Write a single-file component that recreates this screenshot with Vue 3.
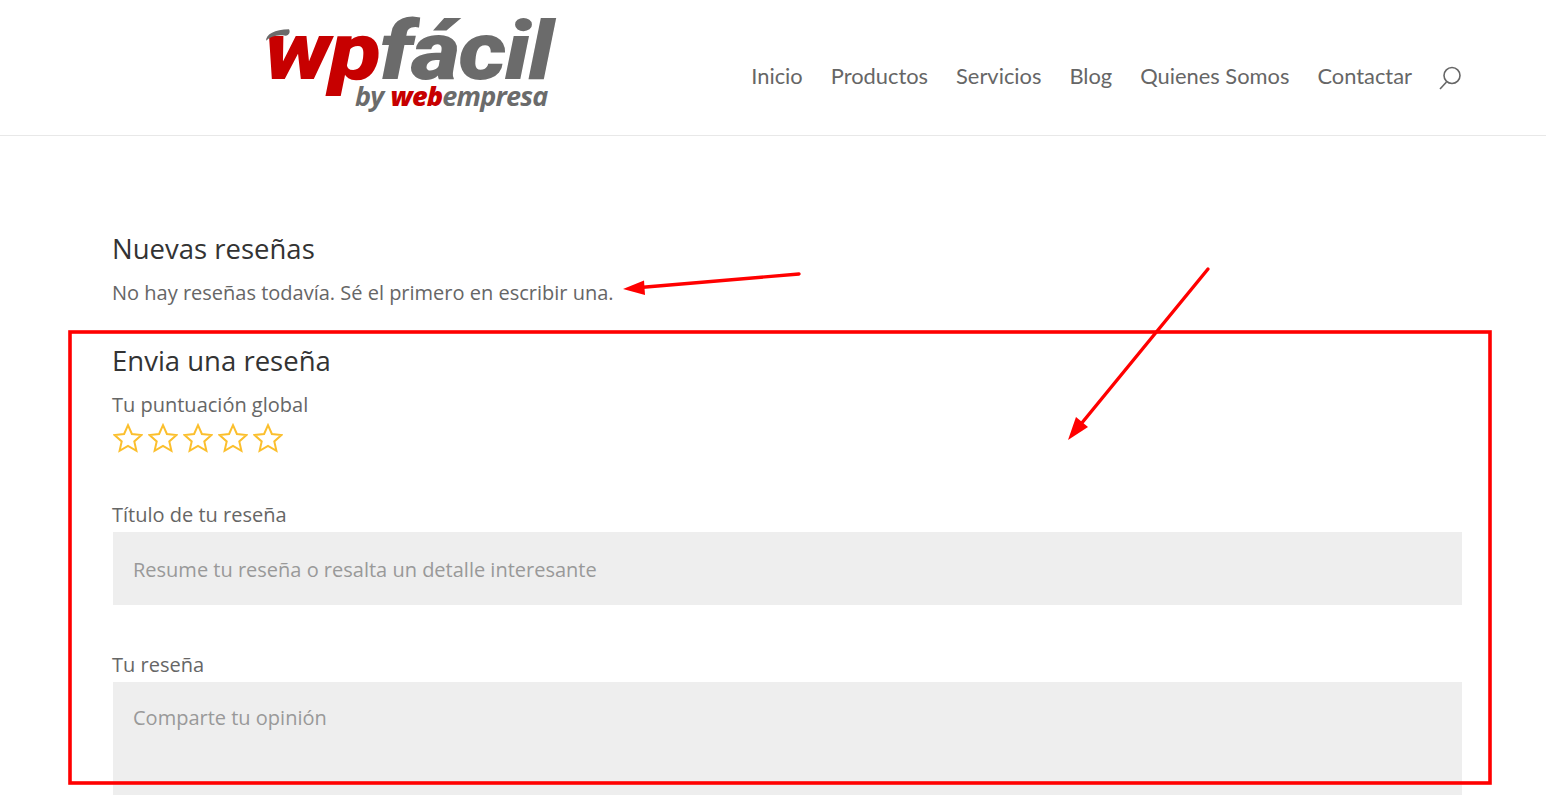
<template>
  <div class="page">
    <header class="site-header">
      <a class="logo" href="#" aria-label="wpfácil by webempresa">
        <div class="logo-main">
          <svg class="logo-drop" viewBox="0 0 30 18" aria-hidden="true">
            <path d="M1 17C1 8 11 1 28 1C30 5 28 9 24 10C14 8 6 11 1 17Z" fill="#6b6b6b" />
          </svg>
          <span class="logo-wp">wp</span><span class="logo-facil">fácil</span>
        </div>
        <div class="logo-sub">
          <span class="logo-by">by</span><span class="logo-web">web</span><span class="logo-empresa">empresa</span>
        </div>
      </a>
      <nav class="main-nav">
        <a v-for="item in navItems" :key="item" href="#">{{ item }}</a>
        <svg class="search-icon" viewBox="0 0 24 24" aria-label="Buscar">
          <circle cx="14" cy="9.5" r="8" />
          <path d="M8.5 16L2 23" />
        </svg>
      </nav>
    </header>

    <main class="content">
      <section class="reviews">
        <h2>Nuevas reseñas</h2>
        <p>No hay reseñas todavía. Sé el primero en escribir una.</p>
      </section>

      <form class="review-form" @submit.prevent>
        <h2>Envia una reseña</h2>
        <div class="rating">
          <span class="label">Tu puntuación global</span>
          <div class="stars">
            <svg v-for="n in 5" :key="n" viewBox="0 0 30 30" aria-hidden="true">
              <path d="M15 2.2L18.9 11L28.5 12L21.3 18.4L23.4 27.8L15 23L6.6 27.8L8.7 18.4L1.5 12L11.1 11Z" />
            </svg>
          </div>
        </div>
        <label class="field title-field">
          <span class="label">Título de tu reseña</span>
          <input type="text" placeholder="Resume tu reseña o resalta un detalle interesante" />
        </label>
        <label class="field body-field">
          <span class="label">Tu reseña</span>
          <textarea placeholder="Comparte tu opinión"></textarea>
        </label>
      </form>
    </main>

    <svg class="annotations" viewBox="0 0 1546 795" aria-hidden="true">
      <rect x="70" y="332" width="1420" height="451" />
      <path d="M799 274L640 287.5" />
      <polygon points="623,289 644,280.5 645,295" />
      <path d="M1208 269L1081 424" />
      <polygon points="1068,440 1076,417 1088,427" />
    </svg>
  </div>
</template>

<script setup>
const navItems = ['Inicio', 'Productos', 'Servicios', 'Blog', 'Quienes Somos', 'Contactar']
</script>

<style>
html,
body {
  overflow: hidden;
  background: #fff;
}
</style>

<style scoped>
.page {
  position: relative;
  height: 795px;
  overflow: hidden;
  font-family: "Open Sans", "Noto Sans", sans-serif;
  color: #666;
}

.site-header {
  display: flex;
  align-items: flex-start;
  justify-content: space-between;
  height: 136px;
  box-sizing: border-box;
  padding: 0 84px 0 264px;
  border-bottom: 1px solid #e8e8e8;
}

.logo {
  display: block;
  width: 292px;
  padding-top: 10px;
  text-decoration: none;
}

.logo-main {
  position: relative;
  height: 82px;
  font-family: "Roboto", sans-serif;
  font-size: 82px;
  font-style: italic;
  font-weight: 900;
  line-height: 82px;
  letter-spacing: -1.5px;
  white-space: nowrap;
  transform: scaleX(1.16);
  transform-origin: left center;
}

.logo-drop {
  position: absolute;
  left: 1px;
  top: 17px;
  width: 22px;
  height: 16px;
}

.logo-wp {
  color: #c70000;
}

.logo-facil {
  color: #6b6b6b;
}

.logo-sub {
  margin: -11px 0 0 91px;
  font-family: "Open Sans", sans-serif;
  font-size: 27px;
  font-style: italic;
  font-weight: 700;
  line-height: 30px;
  letter-spacing: -0.8px;
  white-space: nowrap;
  color: #6b6b6b;
}

.logo-web {
  margin-left: 7px;
  color: #c70000;
  font-weight: 800;
}

.main-nav {
  display: flex;
  align-items: center;
  gap: 28px;
  height: 150px;
  font-family: "Lato", sans-serif;
  font-size: 21.87px;
}

.main-nav a {
  color: #666;
  text-decoration: none;
}

.search-icon {
  width: 24px;
  height: 24px;
  margin-top: 5px;
  margin-left: -2px;
  fill: none;
  stroke: #666;
  stroke-width: 1.6;
}

.content {
  padding: 95px 84px 0 112px;
}

h2 {
  margin: 0;
  font-size: 27.5px;
  font-weight: 400;
  line-height: 36px;
  color: #333;
}

.reviews p {
  margin: 9px 0 0;
  font-size: 20px;
  line-height: 34px;
}

.review-form {
  margin-top: 33px;
}

.label {
  display: block;
  font-size: 20px;
  line-height: 28px;
}

.rating {
  margin-top: 12px;
}

.stars {
  display: flex;
  gap: 5px;
  margin-top: 4px;
  margin-left: 1px;
}

.stars svg {
  width: 30px;
  height: 30px;
  fill: none;
  stroke: #fbbf2d;
  stroke-width: 2;
}

.field {
  display: block;
  margin-left: 1px;
}

.title-field {
  margin-top: 48px;
}

.body-field {
  margin-top: 46px;
}

.field .label {
  margin-left: -1px;
  margin-bottom: 3px;
}

input,
textarea {
  display: block;
  width: 100%;
  box-sizing: border-box;
  border: none;
  outline: none;
  background: #eee;
  font-family: inherit;
  font-size: 20px;
  color: #666;
}

input::placeholder,
textarea::placeholder {
  color: #999;
  opacity: 1;
}

input {
  height: 73px;
  padding: 2px 20px 0;
}

textarea {
  height: 200px;
  padding: 22px 20px;
  resize: none;
}

.annotations {
  position: absolute;
  inset: 0;
  width: 1546px;
  height: 795px;
  pointer-events: none;
}

.annotations rect {
  fill: none;
  stroke: #f00;
  stroke-width: 3.6;
}

.annotations path {
  fill: none;
  stroke: #f00;
  stroke-width: 3.4;
  stroke-linecap: round;
}

.annotations polygon {
  fill: #f00;
}
</style>
